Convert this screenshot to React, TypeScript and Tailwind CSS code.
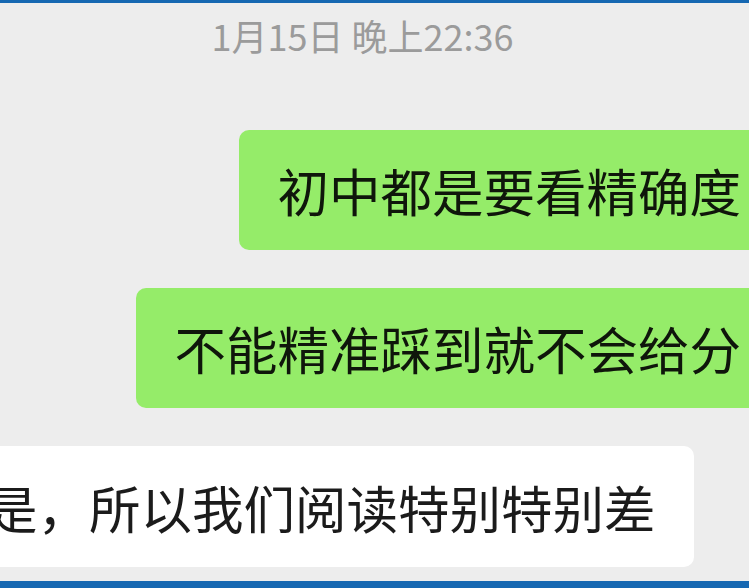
const cjk = { fontFamily: '"Noto Sans CJK SC", "Noto Sans", sans-serif' };

type Msg = { id: number; mine: boolean; text: string };

const messages: Msg[] = [
  { id: 1, mine: true, text: '初中都是要看精确度' },
  { id: 2, mine: true, text: '不能精准踩到就不会给分' },
  { id: 3, mine: false, text: '是，所以我们阅读特别特别差' },
];

// chat rows run past the window edges, like a zoomed-in chat
function Bubble({ msg }: { msg: Msg }) {
  if (msg.mine) {
    return (
      <div className="flex justify-end mr-[-30px]">
        <div className="h-[120px] flex items-center px-[38px] rounded-[10px] bg-[#95ec69] text-[#0f160b] text-[51.5px] whitespace-nowrap">
          {msg.text}
        </div>
      </div>
    );
  }
  return (
    <div className="flex justify-start ml-[-52px]">
      <div className="h-[121px] flex items-center px-[38px] rounded-[10px] bg-white text-[#1b1b1b] text-[51.5px] whitespace-nowrap">
        {msg.text}
      </div>
    </div>
  );
}

export default function App() {
  return (
    <div
      style={cjk}
      className="w-[749px] h-[588px] overflow-hidden bg-[#ededed] border-t-[3px] border-b-[7px] border-[#1668b2] flex flex-col"
    >
      <div className="pt-[11px] pr-[24px] text-center text-[36px] leading-[42px] text-[#9b9b9b]">1月15日 晚上22:36</div>
      <div className="mt-[74px] flex flex-col gap-[38px]">
        {messages.map((m) => (
          <Bubble key={m.id} msg={m} />
        ))}
      </div>
    </div>
  );
}
